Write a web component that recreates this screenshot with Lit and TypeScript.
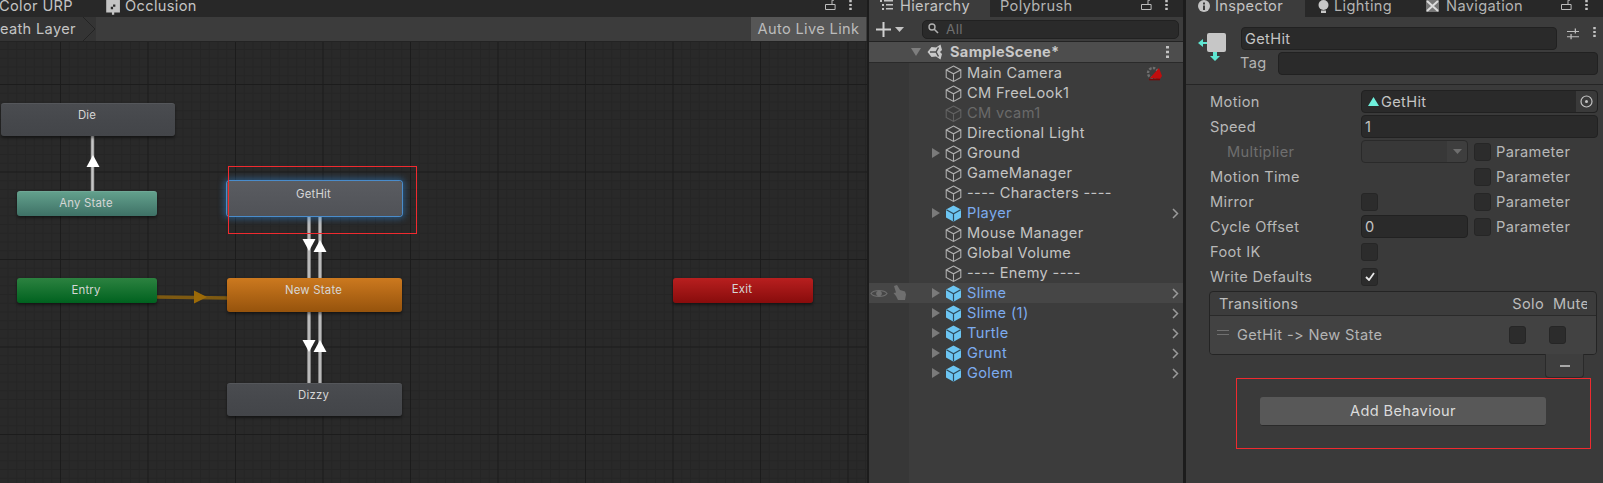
import { LitElement, html, css, svg } from "lit";
import { customElement } from "lit/decorators.js";

const FONT = css`Inter, "Noto Sans", sans-serif`;

const NODES = [
  { label: "Die", x: 1, y: 61, w: 174, h: 33, cls: "grey" },
  { label: "Any State", x: 17, y: 148.5, w: 140, h: 25, cls: "teal" },
  { label: "GetHit", x: 227, y: 139, w: 175, h: 35, cls: "sel" },
  { label: "Entry", x: 17, y: 235.5, w: 140, h: 25, cls: "green" },
  { label: "New State", x: 227, y: 235.5, w: 175, h: 34, cls: "orange" },
  { label: "Exit", x: 673, y: 235.5, w: 140, h: 25, cls: "red" },
  { label: "Dizzy", x: 227, y: 341, w: 175, h: 33, cls: "grey" },
];

const ROWS = [
  { n: "Main Camera", gizmo: true },
  { n: "CM FreeLook1" },
  { n: "CM vcam1", off: true },
  { n: "Directional Light" },
  { n: "Ground", exp: true },
  { n: "GameManager" },
  { n: "---- Characters ----" },
  { n: "Player", exp: true, pre: true },
  { n: "Mouse Manager" },
  { n: "Global Volume" },
  { n: "---- Enemy ----" },
  { n: "Slime", exp: true, pre: true, hot: true },
  { n: "Slime (1)", exp: true, pre: true },
  { n: "Turtle", exp: true, pre: true },
  { n: "Grunt", exp: true, pre: true },
  { n: "Golem", exp: true, pre: true },
];

const cube = (pre: boolean) =>
  pre
    ? html`<svg class="cube" viewBox="0 0 17 17">
        <path d="M8.5 .5 16 4.6v8L8.5 16.8 1 12.6v-8z" fill="#6cc5f2"/>
        <path d="M1.4 4.8 8.5 8.8l7.1-4M8.5 8.8v7.8" fill="none" stroke="#2f4a5c" stroke-width="1.2"/>
      </svg>`
    : html`<svg class="cube" viewBox="0 0 17 17">
        <path d="M8.5 1 15.8 4.9v7.6L8.5 16.4 1.2 12.5V4.9zM1.4 5 8.5 8.8 15.6 5M8.5 8.8v7.4" fill="none" stroke="currentColor" stroke-width="1.1"/>
      </svg>`;

const lock = html`<svg class="lock" viewBox="0 0 11 12"><path d="M.5 5.500h9.600v5H.5zM7 5.500V1.200h2" fill="none" stroke="#bdbdbd" stroke-width="1"/></svg>`;
const dots = html`<svg class="dots" viewBox="0 0 3 12"><path d="M0 0h3v2.600H0zM0 4.700h3v2.600H0zM0 9.400h3V12H0z" fill="#c4c4c4"/></svg>`;

@customElement("app-root")
export class AppRoot extends LitElement {
  static styles = css`
    :host {
      display: flex;
      width: 1603px;
      height: 483px;
      overflow: hidden;
      background: #1c1c1c;
      font-family: ${FONT};
      font-size: 14.6px;
      letter-spacing: 0.35px;
      color: #c4c4c4;
    }
    .panel { display: flex; flex-direction: column; height: 483px; background: #3a3a3a; overflow: hidden; flex: none; }
    .animator { width: 867px; }
    .hier { width: 314px; margin-left: 2px; }
    .insp { width: 417px; margin-left: 3px; }

    .tabs { flex: none; height: 17px; display: flex; align-items: flex-start; background: #282828; position: relative; line-height: 12px; }
    .tab { height: 17px; display: flex; align-items: flex-start; gap: 3px; flex: none; white-space: nowrap; }
    .tab.on { background: #3c3c3c; }
    .tabend { margin-left: auto; display: flex; align-items: flex-start; gap: 13px; padding-right: 15px; }
    .lock { width: 11px; height: 12px; margin-top: -1px; display: block; }
    .dots { width: 3px; height: 10px; display: block; }

    .bar { flex: none; height: 25px; background: #3c3c3c; border-bottom: 1px solid #232323; box-sizing: border-box; display: flex; align-items: center; }

    /* animator */
    .crumb { margin-left: -11px; display: flex; align-items: center; height: 100%; background: #343434; color: #c4c4c4; }
    .crumb svg { width: 14px; height: 24px; display: block; margin-left: 6px; }
    .live { margin-left: auto; height: 100%; background: #565656; color: #bcbcbc; width: 115px; margin-right: 1px; display: flex; align-items: center; justify-content: center; }
    .canvas {
      flex: 1; position: relative; overflow: hidden;
      background-color: #292929;
      background-size: 87.5px 100%, 100% 87.5px, 8.75px 100%, 100% 8.75px;
      background-image:
        linear-gradient(90deg, #1c1c1c 1px, transparent 1px),
        linear-gradient(#1c1c1c 1px, transparent 1px),
        linear-gradient(90deg, #252525 1px, transparent 1px),
        linear-gradient(#252525 1px, transparent 1px);
      background-position: 60px 0, 0 42px, 60px 0, 0 42px;
    }
    .wires { position: absolute; inset: 0; width: 867px; height: 441px; }
    .node {
      position: absolute; box-sizing: border-box; border-radius: 3px;
      font-size: 11.4px; letter-spacing: 0.2px; color: #d6d6d6; text-align: center;
      box-shadow: 0 2px 3px rgba(0,0,0,.45);
    }
    .node span { display: block; transform: translateX(-1px); }
    .grey { background: linear-gradient(#4a4c50, #46484c 50%, #434549); padding-top: 4px; border-top: 1px solid #55575b; }
    .sel { background: linear-gradient(#5a5c61, #505257); padding-top: 6px; box-shadow: 0 0 0 1px #4a8ccb, 0 0 6px 3px rgba(45,125,200,.5); }
    .teal { background: linear-gradient(#62a08c, #3e7166); padding-top: 4px; border-top: 1px solid #6fa896; }
    .green { background: linear-gradient(#2c8240, #00621f); padding-top: 5px; }
    .orange { background: linear-gradient(#cc791f, #96530c); padding-top: 5px; }
    .red { background: linear-gradient(#b81f1f, #880c0c); padding-top: 4px; }
    .redbox { position: absolute; border: 1px solid #f02a2f; box-sizing: border-box; pointer-events: none; }
    .rb1 { left: 228px; top: 124px; width: 189px; height: 68px; }

    /* hierarchy */
    .hier .tab.on { width: 121px; padding-left: 11px; gap: 6px; box-sizing: border-box; }
    .hier .tab.off { padding-left: 10px; color: #b4b4b4; }
    .tabicon { width: 14px; height: 12px; display: block; }
    .hbar { padding-left: 7px; gap: 4px; }
    .plus { width: 15px; height: 15px; display: block; }
    .caret { width: 9px; height: 5px; display: block; }
    .search { margin-left: 14px; width: 257px; height: 19px; box-sizing: border-box; border: 1px solid #212121; border-radius: 5px; background: #2a2a2a; display: flex; align-items: center; gap: 6px; padding-left: 5px; color: #6f6f6f; font-size: 13.5px; }
    .search svg { width: 12px; height: 12px; display: block; }
    .tree { flex: 1; background: linear-gradient(90deg, #373737 40px, #3c3c3c 40px); }
    .scene { height: 21px; background: #4d4d4d; border-bottom: 1px solid #2a2a2a; box-sizing: border-box; display: flex; align-items: center; font-weight: 700; color: #c8c8c8; letter-spacing: 0.3px; }
    .scene .tri { width: 10px; height: 8px; margin-left: 42px; display: block; }
    .scene .logo { width: 15px; height: 16px; margin-left: 6px; margin-right: 8px; display: block; }
    .scene .dots { margin-left: auto; margin-right: 14px; height: 12px; }
    .row { height: 20px; display: flex; align-items: center; position: relative; white-space: nowrap; }
    .row.hot { background: #464646; }
    .row.off { color: #6a6a6a; }
    .row.pre .name { color: #7cabef; }
    .slot { width: 76px; flex: none; display: flex; justify-content: flex-end; padding-right: 5px; box-sizing: border-box; }
    .slot svg { width: 8px; height: 10px; display: block; fill: #7a7a7a; }
    .cube { width: 17px; height: 17px; flex: none; display: block; color: #b0b0b0; margin-right: 5px; }
    .row.off .cube { color: #626262; }
    .chev { position: absolute; left: 303px; top: 5px; width: 7px; height: 11px; display: block; }
    .gizmo { position: absolute; left: 276px; top: 3px; width: 18px; height: 16px; display: block; }
    .eye { position: absolute; left: 1px; top: 5px; width: 18px; height: 11px; display: block; }
    .hand { position: absolute; left: 23px; top: 2px; width: 15px; height: 16px; display: block; }

    /* inspector */
    .insp .tab.on { width: 119px; padding-left: 12px; box-sizing: border-box; }
    .insp .tab.off { color: #b4b4b4; }
    .insp .t2 { padding-left: 12px; }
    .insp .t3 { padding-left: 34px; gap: 6px; }
    .tabic { width: 13px; height: 14px; display: block; flex: none; margin-right: 1px; }
    .occ { width: 17px; height: 16px; }
    .first { margin-left: -1px; width: 105px; }
    .body { flex: 1; display: flex; flex-direction: column; background: #3a3a3a; position: relative; }
    .head { height: 68px; border-bottom: 1px solid #252525; box-sizing: border-box; background: #3c3c3c; display: grid; grid-template-columns: 55px 37px 1fr 46px; grid-template-rows: 23px 23px; row-gap: 2px; padding-top: 10px; }
    .bigicon { grid-row: 1 / span 2; width: 30px; height: 30px; margin: 5px 0 0 12px; display: block; }
    .namef { grid-column: 2 / span 2; height: 23px; }
    .f { background: #2a2a2a; border: 1px solid #212121; border-radius: 4px; box-sizing: border-box; display: flex; align-items: center; padding-left: 3px; color: #c4c4c4; }
    .slider { width: 12px; height: 12px; display: block; margin: 1px 0 0 10px; }
    .hdots { position: absolute; left: 407px; top: 10px; }
    .taglab { color: #b4b4b4; line-height: 23px; margin-left: -1px; }
    .tagf { grid-column: 3 / span 2; height: 23px; margin-right: 5px; }
    .props { padding: 4px 5px 0 24px; display: flex; flex-direction: column; }
    .p { height: 25px; display: grid; grid-template-columns: 151px 107px 6px 17px 5px 1fr; align-items: center; color: #b8b8b8; }
    .p .wide { grid-column: 2 / span 5; height: 23px; position: relative; }
    .p .mid { grid-column: 2; height: 23px; }
    .chk { width: 17px; height: 18px; background: #2c2c2c; border: 1px solid #262626; border-radius: 3px; box-sizing: border-box; display: flex; align-items: center; justify-content: center; }
    .chk svg { width: 10px; height: 9px; display: block; }
    .c2 { grid-column: 2; }
    .c4 { grid-column: 4; }
    .c6 { grid-column: 6; }
    .dim { color: #6e6e6e; padding-left: 17px; }
    .dd { background: #383838; border: 1px solid #2a2a2a; border-radius: 4px; height: 23px; box-sizing: border-box; display: flex; justify-content: flex-end; align-items: center; }
    .dd i { width: 20px; height: 100%; background: #3e3e3e; display: flex; align-items: center; justify-content: center; border-radius: 0 4px 4px 0; }
    .dd svg { width: 9px; height: 5px; display: block; }
    .motion { gap: 2px; color: #c4c4c4; }
    .motion .anim { width: 11px; height: 9px; display: block; margin-left: 3px; }
    .pick { position: absolute; right: 0; top: 0; bottom: 0; width: 21px; background: #3a3a3a; border-radius: 0 4px 4px 0; display: flex; align-items: center; justify-content: center; }
    .pick svg { width: 13px; height: 13px; display: block; }
    .list { margin: 2px 0 0 -1px; width: 388px; border: 1px solid #242424; border-radius: 4px; box-sizing: border-box; display: flex; flex-direction: column; overflow: hidden; background: #3c3c3c; }
    .lh { height: 24px; border-bottom: 1px solid #2a2a2a; display: flex; align-items: center; padding-left: 9px; box-sizing: border-box; color: #bcbcbc; }
    .lh .solo { margin-left: auto; }
    .lh .mute { margin-left: 9px; width: 34px; overflow: hidden; margin-right: 9px; }
    .lb { height: 38px; background: #424242; display: flex; align-items: center; color: #b4b4b4; padding-left: 7px; }
    .grip { width: 12px; height: 5px; display: block; margin-right: 8px; margin-top: -5px; }
    .lb .chk { margin-left: auto; }
    .lb .chk + .chk { margin-left: 23px; margin-right: 30px; }
    .foot { align-self: flex-end; margin-right: 14px; margin-top: -1px; width: 39px; height: 24px; background: #3e3e3e; border: 1px solid #2a2a2a; border-top: none; border-radius: 0 0 4px 4px; box-sizing: border-box; display: flex; align-items: center; justify-content: center; position: relative; }
    .foot b { width: 10px; height: 2px; background: #a8a8a8; display: block; }
    .addbox { margin: 0 12px 0 50px; height: 71px; border: 1px solid #f02a2f; box-sizing: border-box; display: flex; justify-content: flex-start; align-items: flex-start; padding: 18px 0 0 23px; }
    .add { width: 286px; height: 29px; background: #585858; border-radius: 3px; border-bottom: 1px solid #2a2a2a; box-sizing: border-box; display: flex; align-items: center; justify-content: center; color: #dcdcdc; }
  `;

  private wires() {
    const line = "#a8a8a8";
    const seg = (x1: number, y1: number, x2: number, y2: number, c = line) =>
      svg`<line x1=${x1} y1=${y1} x2=${x2} y2=${y2} stroke=${c} stroke-width="3.4"/><line x1=${x1} y1=${y1} x2=${x2} y2=${y2} stroke=${c === line ? "#c6c6c6" : c} stroke-width="1.2"/>`;
    const up = (x: number, a: number) => svg`<path d="M${x} ${a}l6.500 12h-13z" fill="#fff"/>`;
    const down = (x: number, a: number) => svg`<path d="M${x} ${a}l6.500 -12h-13z" fill="#fff"/>`;
    return html`<svg class="wires" viewBox="0 0 867 441">
      ${seg(92.5, 90, 92.5, 150)} ${up(93, 113)}
      ${seg(309, 170, 309, 236)} ${seg(320, 170, 320, 236)}
      ${down(309, 209)} ${up(320, 198)}
      ${seg(309, 268, 309, 342)} ${seg(320, 268, 320, 342)}
      ${down(309, 310)} ${up(320, 298)}
      ${seg(157, 255, 228, 256, "#7e5a12")}
      <path d="M194 248.500 207 255 194 261.500z" fill="#9c6a08"/>
    </svg>`;
  }

  private gutterIcons() {
    return html`
      <svg class="eye" viewBox="0 0 18 11"><path d="M1 5.500C4 1.500 14 1.500 17 5.500 14 9.500 4 9.500 1 5.500z" fill="none" stroke="#6f6f6f" stroke-width="1.200"/><circle cx="9" cy="5.500" r="2.800" fill="#6f6f6f"/></svg>
      <svg class="hand" viewBox="0 0 15 16"><path d="M2 1l3-1 3 5 5 1.500 1 3-1 5.500H6L4 11 1.500 8 4 7.500z" fill="#6f6f6f"/></svg>`;
  }

  private treeRow(r: any) {
    return html`<div class="row ${r.off ? "off" : ""} ${r.pre ? "pre" : ""} ${r.hot ? "hot" : ""}">
      ${r.hot ? this.gutterIcons() : ""}
      <div class="slot">${r.exp ? html`<svg viewBox="0 0 8 10"><path d="M0 0 8 5 0 10z"/></svg>` : ""}</div>
      ${cube(!!r.pre)}
      <span class="name">${r.n}</span>
      ${r.gizmo ? html`<svg class="gizmo" viewBox="0 0 18 16"><circle cx="8" cy="7" r="5" fill="none" stroke="#6e6e6e" stroke-width="2.400" stroke-dasharray="2.500 1.300"/><path d="M5 12 14 2l3 8-2 3z" fill="#c00d0d"/><path d="M4 13.500h11" stroke="#7a0808" stroke-width="1.600"/></svg>` : ""}
      ${r.pre ? html`<svg class="chev" viewBox="0 0 7 11"><path d="M1 1l4.500 4.500L1 10" fill="none" stroke="#9a9a9a" stroke-width="1.500"/></svg>` : ""}
    </div>`;
  }

  private prop(label: string, second: unknown, param: boolean, dim = false) {
    return html`<div class="p">
      <span class=${dim ? "dim" : ""}>${label}</span>
      ${second ?? html`<span></span>`}
      ${param ? html`<div class="chk c4"></div><span class="c6">Parameter</span>` : ""}
    </div>`;
  }

  render() {
    const box = html`<div class="chk c2"></div>`;
    return html`
      <section class="panel animator">
        <div class="tabs">
          <div class="tab first">Color URP</div>
          <div class="tab">
            <svg class="tabic occ" viewBox="0 0 13 14"><path d="M1 0h12v11H8v2H6v-2H1z" fill="#c4c4c4"/><path d="M5 6h2v2H5zM7 4h2v2H7z" fill="#2a2a2a"/></svg>
            Occlusion
          </div>
          <div class="tabend">${lock}${dots}</div>
        </div>
        <div class="bar">
          <div class="crumb">Death Layer<svg viewBox="0 0 14 24"><path d="M0 0h1l12 12L1 24H0z" fill="#343434"/><path d="M1 0l12 12L1 24" fill="none" stroke="#232323"/></svg></div>
          <div class="live">Auto Live Link</div>
        </div>
        <div class="canvas">
          ${this.wires()}
          ${NODES.map(
            (n) => html`<div class="node ${n.cls}" style="left:${n.x}px;top:${n.y}px;width:${n.w}px;height:${n.h}px"><span>${n.label}</span></div>`
          )}
          <div class="redbox rb1"></div>
        </div>
      </section>

      <section class="panel hier">
        <div class="tabs">
          <div class="tab on">
            <svg class="tabicon" viewBox="0 0 14 12"><path d="M0 0h2v2H0zM4 0h9v1.500H4zM2 4h2v2H2zM6 4h7v1.500H6zM2 8h2v2H2zM6 8h7v1.500H6z" fill="#c4c4c4"/></svg>
            Hierarchy
          </div>
          <div class="tab off">Polybrush</div>
          <div class="tabend">${lock}${dots}</div>
        </div>
        <div class="bar hbar">
          <svg class="plus" viewBox="0 0 15 15"><path d="M6.500 0h2v6.500H15v2H8.500V15h-2V8.500H0v-2h6.500z" fill="#d0d0d0"/></svg>
          <svg class="caret" viewBox="0 0 9 5"><path d="M0 0h9L4.500 5z" fill="#c4c4c4"/></svg>
          <div class="search">
            <svg viewBox="0 0 12 12"><circle cx="4" cy="4" r="3" fill="none" stroke="#b0b0b0" stroke-width="1.400"/><path d="M6 6l4 4" stroke="#b0b0b0" stroke-width="1.600"/></svg>
            All
          </div>
        </div>
        <div class="tree">
          <div class="scene">
            <svg class="tri" viewBox="0 0 10 8"><path d="M0 0h10L5 8z" fill="#7e7e7e"/></svg>
            <svg class="logo" viewBox="0 0 15 16"><path d="M.5 8 4.500 3 9 3.500 13.500.5 15 6 13 8l2 2-1.500 5.500L9 12.500 4.500 13z" fill="#c8c8c8"/><path d="M3 8h6l2.500-4.500M9 8l2.500 4.500" fill="none" stroke="#4d4d4d" stroke-width="1.500"/></svg>
            SampleScene*
            ${dots}
          </div>
          ${ROWS.map((r) => this.treeRow(r))}
        </div>
      </section>

      <section class="panel insp">
        <div class="tabs">
          <div class="tab on">
            <svg class="tabic" viewBox="0 0 13 14"><circle cx="6" cy="6" r="6" fill="#c4c4c4"/><path d="M5 2.500h2v2H5zM5 5.500h2V10H5z" fill="#3c3c3c"/></svg>
            Inspector
          </div>
          <div class="tab off t2">
            <svg class="tabic" viewBox="0 0 13 14"><circle cx="6.500" cy="5" r="5" fill="#c8c8c8"/><path d="M4 10.500h5V13H4z" fill="#c8c8c8"/></svg>
            Lighting
          </div>
          <div class="tab off t3">
            <svg class="tabic" viewBox="0 0 13 14"><path d="M0 0h13v12H0z" fill="#777"/><path d="M1 1l11 10M12 1 1 11" stroke="#ddd" stroke-width="2"/></svg>
            Navigation
          </div>
          <div class="tabend">${lock}${dots}</div>
        </div>
        <div class="body">
          <div class="head">
            <svg class="bigicon" viewBox="0 0 30 30">
              <rect x="9" y="1" width="19" height="19" rx="2" fill="#c6c6c6"/>
              <path d="M9 10h-4V7L0 11l5 4v-3h4zM15 20v4h-3l5 5 5-5h-3v-4z" fill="#5fe6d2"/>
            </svg>
            <div class="f namef">GetHit</div>
            <svg class="slider" viewBox="0 0 14 13"><path d="M0 3h14v1.200H0zM0 9h14v1.200H0zM9 0h1.500v6H9zM4 6.500h1.500v6H4z" fill="#bdbdbd"/></svg>
            <div class="taglab">Tag</div>
            <div class="f tagf"></div>
            <div class="hdots">${dots}</div>
          </div>
          <div class="props">
            ${this.prop("Motion", html`<div class="wide f motion"><svg class="anim" viewBox="0 0 11 9"><path d="M5.500 0 11 9H0z" fill="#6ff0dc"/></svg>GetHit<div class="pick"><svg viewBox="0 0 13 13"><circle cx="6.500" cy="6.500" r="5.500" fill="none" stroke="#c4c4c4" stroke-width="1.200"/><circle cx="6.500" cy="6.500" r="1.500" fill="#c4c4c4"/></svg></div></div>`, false)}
            ${this.prop("Speed", html`<div class="wide f">1</div>`, false)}
            ${this.prop("Multiplier", html`<div class="dd c2"><i><svg viewBox="0 0 9 5"><path d="M0 0h9L4.500 5z" fill="#6e6e6e"/></svg></i></div>`, true, true)}
            ${this.prop("Motion Time", null, true)}
            ${this.prop("Mirror", box, true)}
            ${this.prop("Cycle Offset", html`<div class="mid f">0</div>`, true)}
            ${this.prop("Foot IK", box, false)}
            ${this.prop("Write Defaults", html`<div class="chk c2"><svg viewBox="0 0 10 9"><path d="M1 5l3 3 5-7" fill="none" stroke="#e8e8e8" stroke-width="1.800"/></svg></div>`, false)}
            <div class="list">
              <div class="lh">Transitions<span class="solo">Solo</span><span class="mute">Mute</span></div>
              <div class="lb">
                <svg class="grip" viewBox="0 0 12 5"><path d="M0 0h12v1H0zM0 4h12v1H0z" fill="#707070"/></svg>
                GetHit -&gt; New State
                <div class="chk"></div><div class="chk"></div>
              </div>
            </div>
            <div class="foot"><b></b></div>
          </div>
          <div class="addbox"><div class="add">Add Behaviour</div></div>
        </div>
      </section>
    `;
  }
}
